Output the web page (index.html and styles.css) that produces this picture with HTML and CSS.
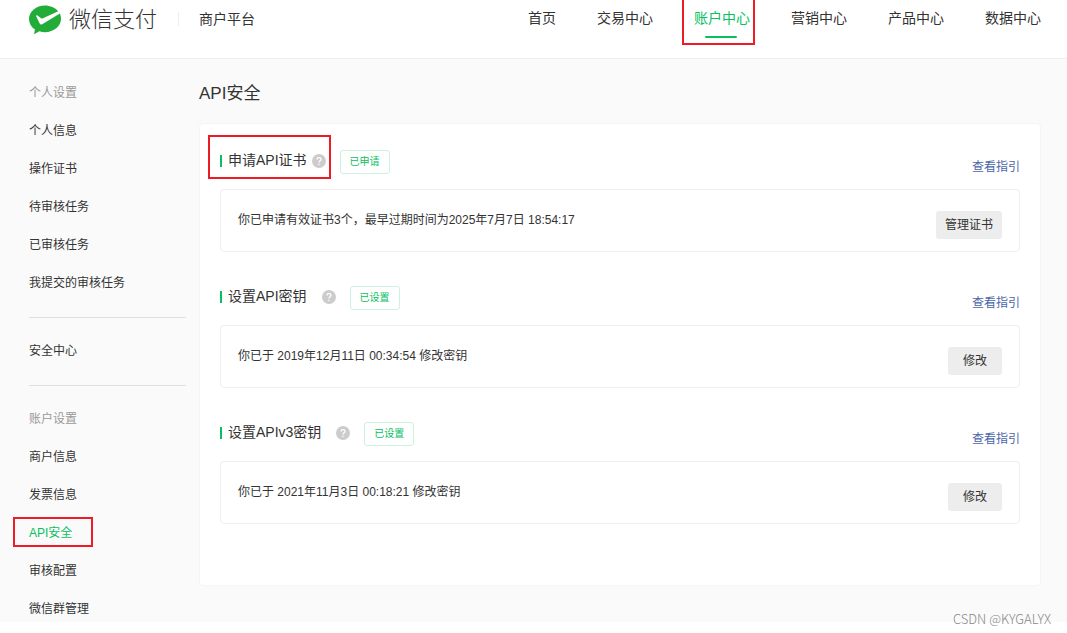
FILE: index.html
```html
<!DOCTYPE html>
<html lang="zh-CN">
<head>
<meta charset="utf-8">
<meta name="viewport" content="width=device-width, initial-scale=1">
<title>API安全 - 微信支付商户平台</title>
<link rel="stylesheet" href="styles.css">
</head>
<body>
<header class="header">
  <a class="brand" href="#">
    <svg class="brand-logo" viewBox="0 0 32 30" aria-hidden="true">
      <path fill="#22ac38" d="M16 0.5C7.2 0.5 0 6.500 0 14c0 4.300 2.300 8 5.900 10.500L5.100 29.300l5.300-3c1.800.6 3.700.9 5.600.9 8.800 0 16-6 16-13.400 0-1.900-.4-3.600-1.100-5.200L13.200 19.200c-1.200.6-1.900.4-2.500-.7L7.300 11.400c-.3-.8.5-1.400 1.200-.9l3.500 2.700c.7.4 1.300.4 2 .1L29.200 6.300C26.300 2.700 21.200.5 16 .5z"/>
    </svg>
    <span class="brand-name">微信支付</span>
  </a>
  <a class="platform" href="#">商户平台</a>
  <nav class="nav">
    <a href="#">首页</a>
    <a href="#">交易中心</a>
    <a class="nav-active" href="#">账户中心</a>
    <a href="#">营销中心</a>
    <a href="#">产品中心</a>
    <a href="#">数据中心</a>
  </nav>
</header>
<div class="layout">
  <aside class="sidebar">
    <span class="side-title">个人设置</span>
    <a href="#">个人信息</a>
    <a href="#">操作证书</a>
    <a href="#">待审核任务</a>
    <a href="#">已审核任务</a>
    <a href="#">我提交的审核任务</a>
    <hr class="side-line">
    <a href="#">安全中心</a>
    <hr class="side-line">
    <span class="side-title">账户设置</span>
    <a href="#">商户信息</a>
    <a href="#">发票信息</a>
    <a class="side-active" href="#">API安全</a>
    <a href="#">审核配置</a>
    <a href="#">微信群管理</a>
  </aside>
  <main class="main">
    <h1 class="page-title">API安全</h1>
    <div class="card">
      <section class="item">
        <div class="item-head">
          <h2 class="item-title item-marked">申请API证书</h2>
          <svg class="help help-near" viewBox="0 0 14 14" aria-hidden="true"><circle cx="7" cy="7" r="7" fill="#ccc"/><path d="M5 5.500C5 3 9 3 9 5.300C9 6.700 7 6.700 7 8.400M7 9.700V11" fill="none" stroke="#fff" stroke-width="1.300"/></svg>
          <span class="badge">已申请</span>
          <a class="guide" href="#">查看指引</a>
        </div>
        <div class="box">
          <p class="box-text">你已申请有效证书3个，最早过期时间为2025年7月7日 18:54:17</p>
          <button class="btn" type="button">管理证书</button>
        </div>
      </section>
      <section class="item">
        <div class="item-head">
          <h2 class="item-title">设置API密钥</h2>
          <svg class="help" viewBox="0 0 14 14" aria-hidden="true"><circle cx="7" cy="7" r="7" fill="#ccc"/><path d="M5 5.500C5 3 9 3 9 5.300C9 6.700 7 6.700 7 8.400M7 9.700V11" fill="none" stroke="#fff" stroke-width="1.300"/></svg>
          <span class="badge">已设置</span>
          <a class="guide" href="#">查看指引</a>
        </div>
        <div class="box">
          <p class="box-text">你已于 2019年12月11日 00:34:54 修改密钥</p>
          <button class="btn" type="button">修改</button>
        </div>
      </section>
      <section class="item">
        <div class="item-head">
          <h2 class="item-title">设置APIv3密钥</h2>
          <svg class="help" viewBox="0 0 14 14" aria-hidden="true"><circle cx="7" cy="7" r="7" fill="#ccc"/><path d="M5 5.500C5 3 9 3 9 5.300C9 6.700 7 6.700 7 8.400M7 9.700V11" fill="none" stroke="#fff" stroke-width="1.300"/></svg>
          <span class="badge">已设置</span>
          <a class="guide" href="#">查看指引</a>
        </div>
        <div class="box">
          <p class="box-text">你已于 2021年11月3日 00:18:21 修改密钥</p>
          <button class="btn" type="button">修改</button>
        </div>
      </section>
    </div>
  </main>
</div>
<span class="watermark">CSDN @KYGALYX</span>
</body>
</html>
```

FILE: styles.css
```css
*,
*::before,
*::after {
  box-sizing: border-box;
}

body {
  margin: 0;
  position: relative;
  padding-bottom: 12px;
  background: #fff;
  color: #333;
  font: 12px/20px "Liberation Sans", "Noto Sans CJK SC", sans-serif;
}

a {
  color: inherit;
  text-decoration: none;
}

h1, h2, p {
  margin: 0;
  font-weight: 400;
}

/* header */
.header {
  display: flex;
  align-items: flex-start;
  height: 59px;
  padding: 0 26px 0 29px;
  border-bottom: 1px solid #efefef;
  font-size: 14px;
}

.brand {
  display: flex;
  align-items: center;
  gap: 8px;
  height: 39px;
}

.brand-logo {
  width: 32px;
  height: 30px;
}

.brand-name {
  font-size: 22px;
  font-weight: 300;
  color: #333;
}

.platform {
  margin: 12px 0 0 21px;
  padding-left: 20px;
  border-left: 1px solid #eee;
  line-height: 14px;
}

.nav {
  display: flex;
  gap: 41px;
  margin-left: auto;
  padding-top: 8px;
}

.nav-active {
  position: relative;
  color: #07c160;
}

.nav-active::before {
  content: "";
  position: absolute;
  left: 11px;
  top: 28px;
  width: 32px;
  height: 2px;
  border-radius: 1px;
  background: #07c160;
}

/* red callout frames */
.nav-active::after,
.side-active::after,
.item-marked::after {
  content: "";
  position: absolute;
  border: 2px solid #ed1c24;
}

.nav-active::after {
  inset: -10px -5px -17px -12px;
}

/* columns */
.layout {
  display: flex;
  background: #fafafa;
}

.sidebar {
  display: flex;
  flex-direction: column;
  gap: 12px;
  width: 186px;
  padding: 21px 0 0 29px;
  line-height: 26px;
}

.side-title {
  color: #999;
}

.side-line {
  width: 100%;
  height: 1px;
  margin: 9px 0 8px;
  border: 0;
  background: #e0e0e0;
}

.side-active {
  position: relative;
  color: #07c160;
}

.side-active::after {
  left: -16px;
  top: -3px;
  width: 80px;
  height: 30px;
}

.main {
  flex: 1;
  padding: 25px 26px 34px 13px;
}

.page-title {
  font-size: 17px;
}

/* card */
.card {
  margin-top: 19px;
  padding: 26px 20px 61px;
  border: 1px solid #f5f5f5;
  border-radius: 4px;
  background: #fff;
}

.item + .item {
  margin-top: 34px;
}

.item-head {
  display: flex;
  align-items: flex-start;
  height: 39px;
}

.item-title {
  position: relative;
  padding-left: 8px;
  font-size: 14px;
}

.item-title::before {
  content: "";
  position: absolute;
  left: 0;
  top: 5px;
  width: 2px;
  height: 12px;
  background: #07c160;
}

.item-marked::after {
  inset: -15px -24px -9px -12px;
}

.help {
  width: 14px;
  height: 14px;
  margin: 4px 14px 0 15px;
}

.help-near {
  margin-left: 5px;
}

.badge {
  padding: 0 9px;
  border: 1px solid #cdf3df;
  border-radius: 3px;
  color: #07c160;
  font-size: 10px;
  line-height: 22px;
}

.guide {
  margin: 7px 0 0 auto;
  color: #4a66a8;
}

.box {
  display: flex;
  align-items: flex-start;
  justify-content: space-between;
  padding: 20px 17px 12px;
  border: 1px solid #eee;
  border-radius: 4px;
}

.btn {
  min-width: 54px;
  height: 28px;
  margin-top: 1px;
  padding: 0 9px;
  border: 0;
  border-radius: 3px;
  background: #ededed;
  color: #333;
  font: inherit;
}

.watermark {
  position: absolute;
  right: 16px;
  bottom: 5px;
  color: #888;
  font-family: "Noto Sans CJK SC", sans-serif;
  font-size: 13px;
  font-weight: 300;
}
```
